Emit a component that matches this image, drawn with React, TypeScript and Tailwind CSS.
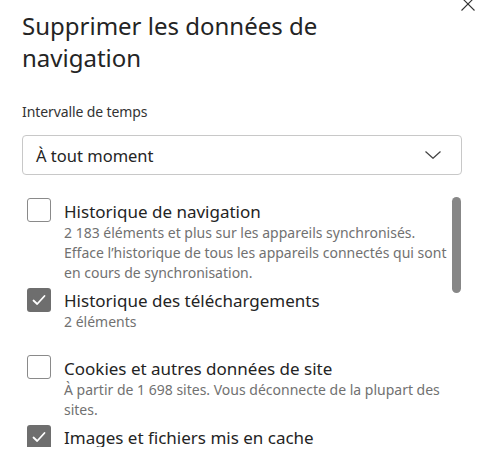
type Item = {
  label: string
  description: string[]
  checked: boolean
  spacing: string
}

const items: Item[] = [
  {
    label: "Historique de navigation",
    description: [
      "2 183 éléments et plus sur les appareils synchronisés.",
      "Efface l’historique de tous les appareils connectés qui sont",
      "en cours de synchronisation.",
    ],
    checked: false,
    spacing: "mb-[5px]",
  },
  {
    label: "Historique des téléchargements",
    description: ["2 éléments"],
    checked: true,
    spacing: "mb-[23px]",
  },
  {
    label: "Cookies et autres données de site",
    description: ["À partir de 1 698 sites. Vous déconnecte de la plupart des", "sites."],
    checked: false,
    spacing: "mb-[5px]",
  },
  {
    label: "Images et fichiers mis en cache",
    description: [],
    checked: true,
    spacing: "",
  },
]

const CheckBox = ({ checked }: { checked: boolean }) => (
  <div
    className={`flex h-[24px] w-[24px] shrink-0 items-center justify-center rounded-[3px] ${
      checked ? "bg-[#6e6e6e]" : "border border-[#8a8a8a] bg-white"
    }`}>
    {checked ? (
      <svg width="16" height="16" viewBox="0 0 16 16" fill="none">
        <path d="M2.5 8.5 L6.2 12 L13.5 4" stroke="white" strokeWidth="1.8" strokeLinecap="round" strokeLinejoin="round" />
      </svg>
    ) : null}
  </div>
)

const App = () => {
  return (
    <main
      className="relative h-[467px] w-[481px] overflow-hidden bg-white text-[#242424]"
      style={{ fontFamily: '"Noto Sans", "Open Sans", sans-serif' }}>
      <button className="absolute left-[461px] top-[-3px]" aria-label="Fermer">
        <svg width="14" height="14" viewBox="0 0 14 14" fill="none">
          <path d="M0.5 0.5 L13.5 13.5 M13.5 0.5 L0.5 13.5" stroke="#333" strokeWidth="1.1" />
        </svg>
      </button>

      <div className="px-[22px] pt-[10px]">
        <h1 className="text-[24px] font-normal leading-[32px]">
          Supprimer les données de
          <br />
          navigation
        </h1>

        <p className="mt-[28px] text-[14px] leading-[20px] tracking-[-0.1px] text-[#333]">Intervalle de temps</p>

        <div className="mt-[13px] flex h-[40px] w-[440px] items-center justify-between rounded-[4px] border border-[#c8c8c8] pl-[13px] pr-[20px]">
          <span className="pt-[2px] text-[16.5px]">À tout moment</span>
          <svg width="16" height="8" viewBox="0 0 16 8" fill="none">
            <path d="M0.5 0.5 L8 7.3 L15.5 0.5" stroke="#444" strokeWidth="1.2" />
          </svg>
        </div>
      </div>

      <div className="mt-[23px] h-[249px] overflow-hidden pl-[27px] pr-[20px]">
        {items.map((item) => (
          <div key={item.label} className={`flex gap-[13px] ${item.spacing}`}>
            <CheckBox checked={item.checked} />
            <div className="min-w-0 pt-[2.5px]">
              <p className="whitespace-nowrap text-[17px] leading-[22px]">{item.label}</p>
              <div className="text-[14px] leading-[20px] text-[#717171]">
                {item.description.map((line) => (
                  <p key={line} className="whitespace-nowrap">
                    {line}
                  </p>
                ))}
              </div>
            </div>
          </div>
        ))}
      </div>

      <div className="absolute left-[452px] top-[197px] h-[96px] w-[9px] rounded-full bg-[#878787]" />
    </main>
  )
}

export default App
